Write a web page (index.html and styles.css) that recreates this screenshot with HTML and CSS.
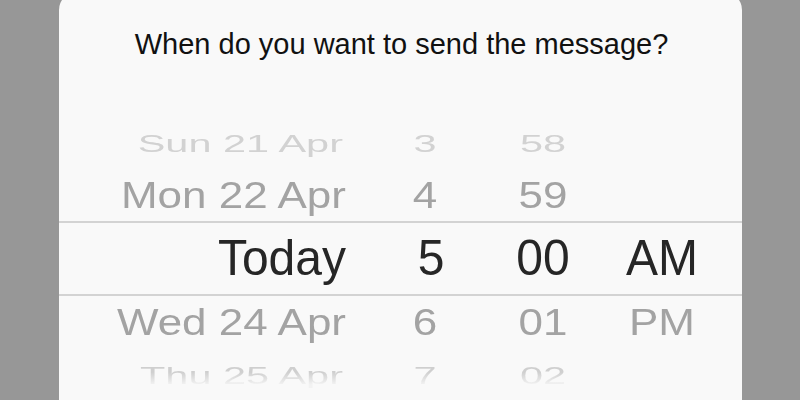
FILE: index.html
```html
<!DOCTYPE html>
<html>
<head>
<meta charset="utf-8">
<link rel="stylesheet" href="styles.css">
</head>
<body>
<div class="sheet">
  <div class="title">When do you want to send the message?</div>
  <div class="picker">
    <div class="row far">
      <div class="cell date">Sun 21 Apr</div>
      <div class="cell hour">3</div>
      <div class="cell min">58</div>
      <div class="cell ampm"></div>
    </div>
    <div class="row near">
      <div class="cell date">Mon 22 Apr</div>
      <div class="cell hour">4</div>
      <div class="cell min">59</div>
      <div class="cell ampm"></div>
    </div>
    <div class="row sel">
      <div class="cell date">Today</div>
      <div class="cell hour">5</div>
      <div class="cell min">00</div>
      <div class="cell ampm">AM</div>
    </div>
    <div class="row near">
      <div class="cell date">Wed 24 Apr</div>
      <div class="cell hour">6</div>
      <div class="cell min">01</div>
      <div class="cell ampm">PM</div>
    </div>
    <div class="row far fade">
      <div class="cell date">Thu 25 Apr</div>
      <div class="cell hour">7</div>
      <div class="cell min">02</div>
      <div class="cell ampm"></div>
    </div>
  </div>
</div>
</body>
</html>
```

FILE: styles.css
```css
html, body {
  margin: 0;
  padding: 0;
  height: 100%;
  overflow: hidden;
}
body {
  background: #979797;
  padding: 0 58px 0 59px;
  font-family: "Liberation Sans", Arial, sans-serif;
}
.sheet {
  margin-top: -8px;
  height: 420px;
  background: #f9f9f9;
  border-radius: 18px 18px 0 0;
  padding-top: 38px;
  box-sizing: border-box;
}
.title {
  font-size: 29px;
  line-height: 1;
  height: 28.5px;
  text-align: center;
  color: #111;
  padding-left: 2px;
}
.picker {
  margin-top: 59.5px;
  display: flex;
  flex-direction: column;
}
.row {
  display: grid;
  grid-template-columns: 287px 158px 78px 1fr;
  align-items: center;
  line-height: 1;
  white-space: nowrap;
}
.cell {
  text-align: center;
}
.cell.date {
  text-align: right;
}
.row.far {
  height: 51px;
  font-size: 41.5px;
  color: #d2d2d2;
}
.row.far .cell {
  transform: scaleY(0.59);
}
.row.far .date {
  padding-right: 3px;
}
.row.near {
  height: 52px;
  font-size: 44px;
  color: #a3a3a3;
}
.row.near .cell {
  transform: scaleY(0.86);
}
.row.sel {
  height: 75px;
  box-sizing: border-box;
  border-top: 2px solid #d3d3d3;
  border-bottom: 2px solid #d3d3d3;
  font-size: 48px;
  color: #262626;
}
.row.sel .cell {
  transform: scaleY(1.03);
}
.row.sel .hour {
  padding-left: 12px;
}
.row.fade {
  height: 52px;
  padding-top: 4px;
  box-sizing: border-box;
}
.row.fade .cell {
  background: linear-gradient(to bottom, #cfcfcf 35%, #f2f2f2 85%);
  -webkit-background-clip: text;
  background-clip: text;
  color: transparent;
}
```
